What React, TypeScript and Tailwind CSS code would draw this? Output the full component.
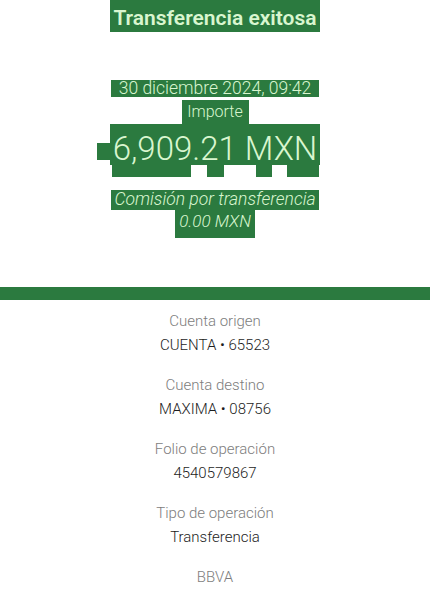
const rows = [
  { label: 'Cuenta origen', value: 'CUENTA • 65523' },
  { label: 'Cuenta destino', value: 'MAXIMA • 08756' },
  { label: 'Folio de operación', value: '4540579867' },
  { label: 'Tipo de operación', value: 'Transferencia' },
];

export default function App() {
  return (
    <div className="min-h-screen w-[430px] bg-white font-['Roboto',sans-serif]">
      {/* summary, with the green highlight boxes */}
      <div className="flex flex-col items-center text-[#d9f6cf]">
        <div className="flex h-[32px] w-[210px] items-end justify-center bg-[#2b7a3f] pb-[3px] text-[21px] font-semibold leading-none">
          Transferencia exitosa
        </div>

        <div className="mt-[48px] flex h-[17px] w-[208px] items-center justify-center whitespace-nowrap bg-[#2b7a3f] text-[17.5px] font-light leading-none">
          30 diciembre 2024, 09:42
        </div>

        <div className="mt-[3px] flex h-[24px] w-[67px] items-center justify-center bg-[#2b7a3f] text-[16px] font-light leading-none">
          Importe
        </div>

        <div className="flex w-[210px] flex-col">
          <div className="relative flex h-[41px] items-end justify-center whitespace-nowrap bg-[#2b7a3f] text-[33px] font-light leading-none">
            <span className="absolute left-[-13px] top-[19px] h-[17px] w-[13px] bg-[#2b7a3f]" />
            6,909.21 MXN
          </div>
          <div className="flex h-[12px]">
            <div className="ml-[2px] w-[79px] bg-[#2b7a3f]" />
            <div className="ml-[16px] w-[17px] bg-[#2b7a3f]" />
            <div className="ml-[32px] w-[16px] bg-[#2b7a3f]" />
            <div className="ml-[15px] w-[32px] bg-[#2b7a3f]" />
          </div>
        </div>

        <div className="mt-[13px] flex h-[20px] w-[208px] items-center justify-center whitespace-nowrap bg-[#2b7a3f] text-[17.5px] font-light italic leading-none">
          Comisión por transferencia
        </div>
        <div className="flex h-[28px] w-[80px] items-start justify-center whitespace-nowrap bg-[#2b7a3f] pt-[3px] text-[17px] font-light italic leading-none">
          0.00 MXN
        </div>
      </div>

      <div className="mt-[49px] h-[13px] w-full bg-[#2b7a3f]" />

      {/* details */}
      <div className="flex flex-col items-center pt-[9px] text-[15px] font-light leading-[24px]">
        {rows.map((r) => (
          <div key={r.label} className="mb-[16px] flex flex-col items-center">
            <span className="text-[#7d7d7d]">{r.label}</span>
            <span className="text-[#1d1d1d]">{r.value}</span>
          </div>
        ))}
        <span className="text-[#7d7d7d]">BBVA</span>
      </div>
    </div>
  );
}
